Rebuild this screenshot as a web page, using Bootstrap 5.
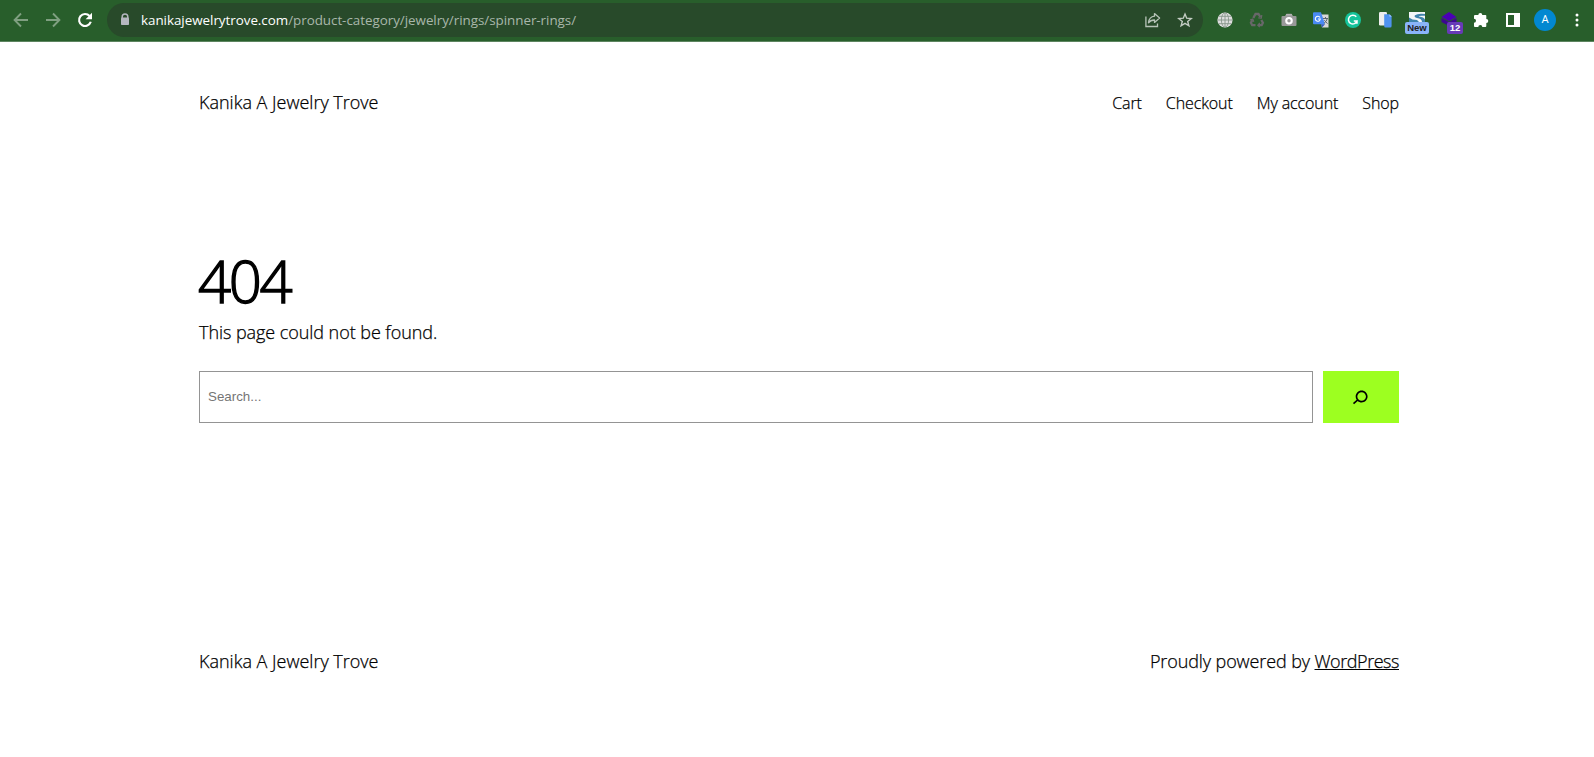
<!DOCTYPE html>
<html lang="en">
<head>
<meta charset="utf-8">
<meta name="viewport" content="width=device-width, initial-scale=1">
<title>Page not found – Kanika A Jewelry Trove</title>
<link href="https://cdn.jsdelivr.net/npm/bootstrap@5.3.0/dist/css/bootstrap.min.css" rel="stylesheet">
<style>
body{font-family:"Open Sans","Noto Sans",sans-serif;font-weight:300;color:#000;background:#fff;height:757px;overflow:hidden}
.chrome{height:42px;background:#285e2b;border-bottom:1px solid #5d8560;padding:0 0 1px 5px}
.slot{width:32px;height:40px;flex:none;display:flex;align-items:center;justify-content:center;position:relative}
.omni{width:1096px;height:34px;border-radius:17px;background:#284a2a;margin-left:6px;margin-right:6px;padding-left:11px;padding-right:2px}
.url{font-size:13.4px;letter-spacing:-.03px;font-weight:400;color:#a9b7aa;margin-left:9px;white-space:nowrap;line-height:20px}
.url b{font-weight:400;color:#fff}
.tag{position:absolute;font:700 9.5px/12px "Liberation Sans",sans-serif;border-radius:2px;text-align:center}
.avatar{width:22px;height:22px;border-radius:50%;background:#0288d1;color:#fff;font:400 11px/22px Roboto,sans-serif;text-align:center}
.page{width:1200px;margin:0 auto;position:relative;left:2px}
.site,.links{-webkit-text-stroke:.25px #000}
.site{font-size:18px;line-height:28px}
.top{padding-top:46px}
.links{padding-top:2px}
.links a{font-size:16px;line-height:26px;letter-spacing:-.1px;color:#000;text-decoration:none}
h1{font-size:58px;font-weight:300;line-height:66px;letter-spacing:-2.3px;margin:0 0 0 -1px;-webkit-text-stroke:1.4px #000}
.found{margin-top:4px;letter-spacing:-.06px}
.wp{letter-spacing:-.1px}
.wp a{letter-spacing:-.45px}
.s-input{height:52px;border:1px solid #949494;border-radius:0;padding:0 8px 2px;font:400 13.33px "Liberation Sans",sans-serif;color:#757575}
.s-input::placeholder{color:#757575}
.s-btn{width:76px;height:52px;background:#9dff20;border:0;border-radius:0;padding:0 2px 0 0;flex:none}
</style>
<script src="https://cdn.jsdelivr.net/npm/bootstrap@5.3.0/dist/js/bootstrap.bundle.min.js" defer></script>
</head>
<body>
<div class="chrome d-flex align-items-center">
  <div class="slot"><svg width="16" height="16" fill="none" stroke="#7f9f81" stroke-width="1.9"><path d="M15 8H2M8 1.5 1.6 8 8 14.5"/></svg></div>
  <div class="slot"><svg width="16" height="16" fill="none" stroke="#7f9f81" stroke-width="1.9"><path d="M1 8h13M8 1.5 14.4 8 8 14.5"/></svg></div>
  <div class="slot"><svg width="16" height="16"><path d="M12.6 4A6 6 0 1 0 13.8 9.8" fill="none" stroke="#fff" stroke-width="2.1"/><path d="M15 .8v6.4H8.6z" fill="#fff"/></svg></div>
  <div class="omni d-flex align-items-center">
    <svg width="14" height="14" class="flex-shrink-0"><path d="M4.2 5V3.8a2.8 2.8 0 0 1 5.6 0V5" fill="none" stroke="#b5b7c0" stroke-width="1.5"/><rect x="3" y="4.6" width="8" height="7.4" rx=".8" fill="#b5b7c0"/></svg>
    <div class="url"><b>kanikajewelrytrove.com</b>/product-category/jewelry/rings/spinner-rings/</div>
    <div class="slot ms-auto"><svg width="16" height="16" fill="none" stroke="#b7c3b8" stroke-width="1.3"><path d="M.9 4.5v10h11.6v-3"/><path d="M9.5 1.6 14.6 6 9.5 10.4V8C6.500 8 4.800 8.800 3.500 10.800 3.900 7 6 4.600 9.500 4.200z" stroke-linejoin="round"/></svg></div>
    <div class="slot"><svg width="16" height="16" fill="none" stroke="#c3ccc3" stroke-width="1.4"><path d="m8 2 1.700 4.200 4.500.3-3.500 2.900 1.200 4.400L8 11.400l-3.900 2.400 1.200-4.400L1.800 6.500l4.500-.3z"/></svg></div>
  </div>
  <div class="slot"><svg width="16" height="16"><circle cx="8" cy="8" r="7.6" fill="#dedede"/><g fill="none" stroke="#87958a" stroke-width=".9"><ellipse cx="8" cy="8" rx="3.600" ry="7.300"/><path d="M8 .5v15M.5 8h15M1.800 4.300h12.400M1.800 11.700h12.400"/></g></svg></div>
  <div class="slot"><svg width="16" height="16" fill="none" stroke="#686769" stroke-width="2.3"><path d="M4.300 6 6.500 2h3l1.800 3M12.300 8l1.600 2.700-1.200 2.500H9.300M6.500 13.200H3.200L1.900 10.700 3.400 8"/><path d="m9.300 5.800 3 .2.500-3M10.800 11l-2 2.200 2 2M1 8l2.800-.9 1 2.700" stroke-width="1.200"/></svg></div>
  <div class="slot"><svg width="16" height="16"><path d="M1.500 4H4l1.500-2.200h5L12 4h2.500q1 0 1 1v8q0 1-1 1h-13q-1 0-1-1V5q0-1 1-1z" fill="#999"/><path d="M5 3.300h6v-.9H5z" fill="#c5c5c5"/><circle cx="8" cy="8.700" r="3.800" fill="#fff"/><circle cx="8" cy="8.700" r="1.700" fill="#999"/></svg></div>
  <div class="slot"><svg width="16" height="16"><path d="M6 2.500h9.500v13H9z" fill="#d8d8d8"/><path d="M1 .3h7l4 12H1q-1 0-1-1v-10q0-1 1-1z" fill="#4a8af4"/><path d="m8 12.300 4 0-3 3.200z" fill="#3059bd"/><path d="M7 5.600A2.500 2.500 0 1 0 7.300 7H5" fill="none" stroke="#fff" stroke-width="1.100"/><path d="M10 6.500h5M12.500 5v1.500M14.300 6.500q-.7 3-3.300 4.800M11.300 8.200l3.200 3.500" fill="none" stroke="#5d6874" stroke-width="1"/></svg></div>
  <div class="slot"><svg width="16" height="16"><circle cx="8" cy="8" r="8" fill="#15c39a"/><path d="M11.300 4.800A4.400 4.400 0 1 0 12 9H8.800M12 8.500v3.200" fill="none" stroke="#fff" stroke-width="1.500"/></svg></div>
  <div class="slot"><svg width="16" height="16"><rect x="2" y="0" width="8" height="13.500" rx="1.300" fill="#eee"/><path d="M7.200 2.300h5.400l2 2V14q0 1.500-1.500 1.500H8.500q-1.300 0-1.300-1.300z" fill="#4f92ef"/><path d="M12.500 2.500v2h2z" fill="#bcd6fb"/></svg></div>
  <div class="slot"><svg width="16" height="16"><path d="M0 0h16v16H0z" fill="#f3f6f8"/><path d="M16 2Q9 1 6 3.200 4.500 5 8 6q5 .5 5 4h3V7.500Q15 5 10 4.500 8.500 3.500 16 3.800zM0 5.500Q3 8 8 8l2 2H0z" fill="#3f83ac"/></svg><span class="tag" style="left:4px;top:22px;width:24px;background:#8ab4f8;color:#202124">New</span></div>
  <div class="slot"><svg width="16" height="16"><path d="m8 0 7.500 5L8 9 .5 5z" fill="#4b00b5"/><path d="m.5 6 7.500 4 7.500-4v5L8 14 .5 10z" fill="#3c0792"/></svg><span class="tag" style="left:14px;top:22px;width:16px;background:#673ab7;color:#fff">12</span></div>
  <div class="slot"><svg width="16" height="16"><path d="M2 3h3.300a2 2 0 0 1 4 0h3.200q.8 0 .8.800v3.100a2 2 0 0 1 0 4v3.200q0 .9-.8.900H9.300a2 2 0 0 0-4 0H1.900q-.9 0-.9-.9v-3.300a2 2 0 0 0 0-4V3.900Q1 3 2 3z" fill="#fff"/></svg></div>
  <div class="slot"><svg width="16" height="16"><path fill-rule="evenodd" d="M1 1h14v14H1zM3 3v10h6V3z" fill="#fff"/></svg></div>
  <div class="slot"><div class="avatar">A</div></div>
  <div class="slot"><svg width="4" height="16" fill="#fff"><circle cx="2" cy="3" r="1.500"/><circle cx="2" cy="8" r="1.500"/><circle cx="2" cy="13" r="1.500"/></svg></div>
</div>
<div class="page">
  <header class="top d-flex justify-content-between">
    <span class="site">Kanika A Jewelry Trove</span>
    <nav class="links d-flex gap-4"><a href="#">Cart</a><a href="#">Checkout</a><a href="#">My account</a><a href="#">Shop</a></nav>
  </header>
  <main style="padding-top:132px">
    <h1>404</h1>
    <p class="site found mb-0">This page could not be found.</p>
    <form class="d-flex" style="gap:10px;margin-top:25px">
      <input class="s-input flex-grow-1" type="search" placeholder="Search...">
      <button class="s-btn" type="button" aria-label="Search"><svg width="26" height="26" viewBox="0 0 24 24"><path d="M13.500 6C10.500 6 8 8.500 8 11.500c0 1.100.3 2.100.9 3l-3.400 3 1 1.100 3.400-2.900c1 .9 2.200 1.400 3.600 1.400 3 0 5.500-2.500 5.500-5.500C19 8.500 16.500 6 13.500 6zm0 9.500c-2.200 0-4-1.800-4-4s1.800-4 4-4 4 1.800 4 4-1.800 4-4 4z"/></svg></button>
    </form>
  </main>
  <footer class="d-flex justify-content-between site" style="padding-top:224px">
    <span>Kanika A Jewelry Trove</span>
    <span class="wp">Proudly powered by <a href="#" class="text-black">WordPress</a></span>
  </footer>
</div>
</body>
</html>
